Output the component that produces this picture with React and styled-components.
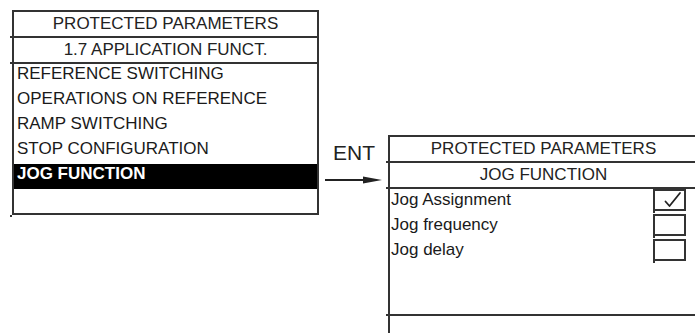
import React from 'react';
import styled, { createGlobalStyle, css } from 'styled-components';

const GlobalStyle = createGlobalStyle`
  *, *::before, *::after {
    box-sizing: border-box;
    margin: 0;
    padding: 0;
  }

  html, body {
    background: #ffffff;
    overflow: hidden;
    width: 695px;
    height: 333px;
  }

  body {
    font-family: "Liberation Sans", Arial, sans-serif;
    color: #1a1a1a;
  }
`;

const menuItems = [
  'REFERENCE SWITCHING',
  'OPERATIONS ON REFERENCE',
  'RAMP SWITCHING',
  'STOP CONFIGURATION',
  'JOG FUNCTION',
];

const jogItems = [
  { label: 'Jog Assignment', checked: true },
  { label: 'Jog frequency', checked: false },
  { label: 'Jog delay', checked: false },
];

function App() {
  return (
    <Page>
      <GlobalStyle />

      <Screen.Wrapper $width={307}>
        <Screen.Title>PROTECTED PARAMETERS</Screen.Title>
        <Screen.Title>1.7 APPLICATION FUNCT.</Screen.Title>
        <Screen.List>
          {menuItems.map((item) => (
            <Screen.Item key={item} $selected={item === 'JOG FUNCTION'}>
              {item}
            </Screen.Item>
          ))}
          <Screen.Blank $height={24} />
        </Screen.List>
      </Screen.Wrapper>

      <Connector.Wrapper>
        <Connector.Label>ENT</Connector.Label>
        <Connector.Arrow width="57" height="10" viewBox="0 0 57 10">
          <line x1="0" y1="5" x2="42" y2="5" stroke="#222" strokeWidth="2" />
          <polygon points="38,1.5 57,5 38,8.5" fill="#222" />
        </Connector.Arrow>
      </Connector.Wrapper>

      <Screen.Wrapper $width={311} $offset={125}>
        <Screen.Title>PROTECTED PARAMETERS</Screen.Title>
        <Screen.Title>JOG FUNCTION</Screen.Title>
        <Screen.Options>
          {jogItems.map((option) => (
            <Screen.Option key={option.label}>
              <Screen.OptionText>{option.label}</Screen.OptionText>
              <CheckBox>
                {option.checked && (
                  <svg width="29" height="18" viewBox="0 0 29 18">
                    <path
                      d="M10.5 10.5 L14.5 15 L25 2"
                      fill="none"
                      stroke="#222"
                      strokeWidth="1.8"
                      strokeLinecap="round"
                      strokeLinejoin="round"
                    />
                  </svg>
                )}
              </CheckBox>
            </Screen.Option>
          ))}
        </Screen.Options>
        <Screen.Blank $height={25} />
      </Screen.Wrapper>
    </Page>
  );
}

/* little pen overshoot where a rule meets the left frame line */
const tick = css`
  position: relative;

  &::before {
    content: "";
    position: absolute;
    left: -4px;
    bottom: -2px;
    width: 2px;
    height: 2px;
    background: #333;
  }
`;

const Page = styled.main`
  display: flex;
  align-items: flex-start;
  padding: 10px 0 0 12px;
  width: 695px;
  height: 333px;
`;

const Screen = {
  Wrapper: styled.section`
    flex: none;
    width: ${({ $width }) => $width}px;
    margin-top: ${({ $offset }) => $offset || 0}px;
    border: 2px solid #333;
    display: flex;
    flex-direction: column;
    font-size: 17px;
  `,
  Title: styled.div`
    ${tick}
    height: 26px;
    border-bottom: 2px solid #333;
    text-align: center;
    line-height: 24px;
    color: #222;
    white-space: nowrap;
  `,
  List: styled.div`
    display: flex;
    flex-direction: column;
  `,
  Item: styled.div`
    height: 25px;
    padding: 1px 0 0 3px;
    line-height: 17px;
    white-space: nowrap;
    background: ${({ $selected }) => ($selected ? '#000' : 'transparent')};
    color: ${({ $selected }) => ($selected ? '#fff' : '#1a1a1a')};
    font-weight: ${({ $selected }) => ($selected ? 'bold' : 'normal')};
  `,
  Blank: styled.div`
    ${tick}
    height: ${({ $height }) => $height}px;

    &::before {
      bottom: -4px;
    }
  `,
  Options: styled.div`
    ${tick}
    height: 127px;
    display: flex;
    flex-direction: column;
    border-bottom: 2px solid #333;
  `,
  Option: styled.div`
    height: 25px;
    display: flex;
    align-items: flex-start;
    justify-content: space-between;
    padding-right: 11px;
  `,
  OptionText: styled.span`
    padding: 2px 0 0 1px;
    line-height: 17px;
    white-space: nowrap;
  `,
};

const CheckBox = styled.div`
  position: relative;
  width: 33px;
  height: 22px;
  border: 2px solid #333;
  display: flex;

  &::after {
    content: "";
    position: absolute;
    left: -2px;
    bottom: -4px;
    width: 2px;
    height: 2px;
    background: #333;
  }
`;

const Connector = {
  Wrapper: styled.div`
    flex: none;
    width: 69px;
    margin-top: 132px;
    display: flex;
    flex-direction: column;
  `,
  Label: styled.span`
    padding-left: 14px;
    font-size: 21px;
    line-height: 21px;
    color: #222;
  `,
  Arrow: styled.svg`
    display: block;
    margin: 12px 0 0 6px;
  `,
};

export default App;
